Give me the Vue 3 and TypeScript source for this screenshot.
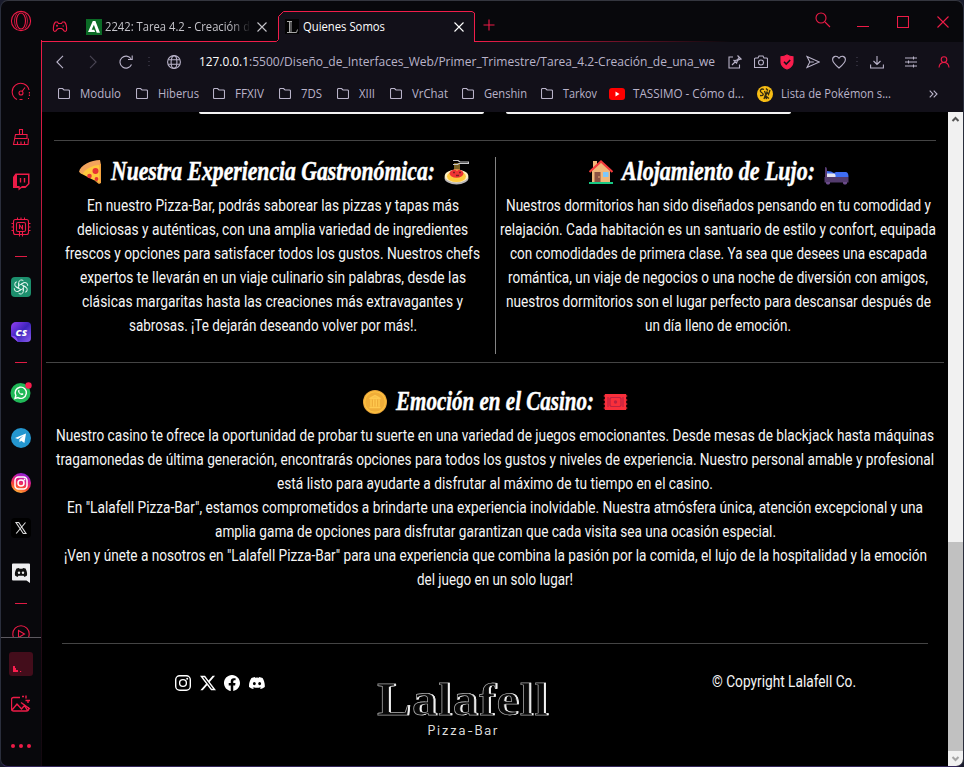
<script setup lang="ts">
import { h } from 'vue'

interface FitProps { t: string; w: number; h: number; b: number }

// One line of text stretched or condensed to a known measure
const FitText = (p: FitProps) =>
  h('svg', { width: p.w, height: p.h, class: 'fit' }, [
    h('text', { x: 0, y: p.b, textLength: p.w, lengthAdjust: 'spacingAndGlyphs', fill: 'currentColor' }, p.t),
  ])
FitText.props = ['t', 'w', 'h', 'b']

type Line = [string, number]

const food: Line[] = [
  ['En nuestro Pizza-Bar, podrás saborear las pizzas y tapas más', 372],
  ['deliciosas y auténticas, con una amplia variedad de ingredientes', 391],
  ['frescos y opciones para satisfacer todos los gustos. Nuestros chefs', 415],
  ['expertos te llevarán en un viaje culinario sin palabras, desde las', 386],
  ['clásicas margaritas hasta las creaciones más extravagantes y', 381],
  ['sabrosas. ¡Te dejarán deseando volver por más!.', 288],
]
const rooms: Line[] = [
  ['Nuestros dormitorios han sido diseñados pensando en tu comodidad y', 425],
  ['relajación. Cada habitación es un santuario de estilo y confort, equipada', 436],
  ['con comodidades de primera clase. Ya sea que desees una escapada', 417],
  ['romántica, un viaje de negocios o una noche de diversión con amigos,', 420],
  ['nuestros dormitorios son el lugar perfecto para descansar después de', 425],
  ['un día lleno de emoción.', 146],
]
const casino: Line[] = [
  ['Nuestro casino te ofrece la oportunidad de probar tu suerte en una variedad de juegos emocionantes. Desde mesas de blackjack hasta máquinas', 878],
  ['tragamonedas de última generación, encontrarás opciones para todos los gustos y niveles de experiencia. Nuestro personal amable y profesional', 878],
  ['está listo para ayudarte a disfrutar al máximo de tu tiempo en el casino.', 436],
  ['En "Lalafell Pizza-Bar", estamos comprometidos a brindarte una experiencia inolvidable. Nuestra atmósfera única, atención excepcional y una', 856],
  ['amplia gama de opciones para disfrutar garantizan que cada visita sea una ocasión especial.', 561],
  ['¡Ven y únete a nosotros en "Lalafell Pizza-Bar" para una experiencia que combina la pasión por la comida, el lujo de la hospitalidad y la emoción', 863],
  ['del juego en un solo lugar!', 156],
]

// name, text width, distance to the next bookmark
const folders: [string, number, number][] = [
  ['Modulo', 41, 78],
  ['Hiberus', 41, 77],
  ['FFXIV', 29, 66],
  ['7DS', 21, 58],
  ['XIII', 16, 53],
  ['VrChat', 36, 72],
  ['Genshin', 43, 79],
  ['Tarkov', 34, 68],
]
</script>

<template>
  <div class="window">
    <aside class="rail">
      <div class="slot first">
        <svg width="22" height="22" viewBox="0 0 22 22" class="red"><circle cx="11" cy="11" r="9.6" /><ellipse cx="11" cy="11" rx="4.5" ry="8" /><path d="M7 3.5c-3.2 4-3.2 11 0 15M15 3.5c3.2 4 3.2 11 0 15" stroke-width=".8" /></svg>
      </div>
      <div class="slot">
        <svg width="20" height="20" viewBox="0 0 20 20" class="red"><path d="M6 17.5A8.5 8.5 0 1 1 18 8" /><path d="M18.4 10v4M17.5 16v1" stroke-dasharray="1.6 1" /><circle cx="10" cy="11" r="2" /><path d="m11 9.500 3-4M8.500 17.500h3" /></svg>
      </div>
      <div class="slot">
        <svg width="18" height="18" viewBox="0 0 18 18" class="red"><path d="M7.500 6V1.500h3V6M3.500 6.500h11.500v4H2.700zM2.700 10.500 1.500 16.500h14.500l.5-6M5.500 16v-2.500M9 16v-2.500M12.500 16v-2.500" /></svg>
      </div>
      <div class="slot">
        <svg width="18" height="18" viewBox="0 0 18 18"><path d="M3.500.5h14v10.500l-4 4H9.500l-3 2.500v-2.500H1V4z" fill="#ed1b47" /><path d="M5 2h11v8.500L13.500 13H10l-2.300 1.700V13H5z" fill="#08080c" /><path d="M8.500 5v4.500M12.500 5v4.500" stroke="#ed1b47" stroke-width="1.4" /></svg>
      </div>
      <div class="slot">
        <svg width="20" height="20" viewBox="0 0 20 20" class="red"><rect x="2.500" y="2.500" width="15" height="15" rx="2" /><rect x="5.500" y="5.500" width="9" height="9" rx="1.500" /><path d="M8.500 12V8l3 4V8" /><path d="M6.500.5V3M10 .5V3M13.500.5V3M8.500 14.500v5M11.500 14.500v5M.5 6.500H3M.5 10H3M.5 13.500H3M17 6.500h2.500M17 10h2.500M17 13.500h2.500" /></svg>
      </div>
      <div class="slot sep"><i></i></div>
      <div class="slot">
        <svg width="20" height="20" viewBox="0 0 20 20"><rect width="20" height="20" rx="4" fill="#1c8f6d" /><g fill="none" stroke="#dff3ec" stroke-width="1"><path v-for="a in 6" :key="a" :transform="`rotate(${a * 60} 10 10)`" d="M7.700 8.600V5.600a2.800 2.800 0 0 1 4.700-1.900M7.700 8.600l4.600-2.600" /></g></svg>
      </div>
      <div class="slot">
        <svg width="20" height="20" viewBox="0 0 20 20"><defs><linearGradient id="cs" x1="0" y1="0" x2="1" y2="1"><stop offset="0" stop-color="#9440f4" /><stop offset=".5" stop-color="#3d24bb" /><stop offset="1" stop-color="#8a5bf0" /></linearGradient></defs><path d="M5 0h11a4 4 0 0 1 4 4v12a4 4 0 0 1-4 4H7L0 14V5a5 5 0 0 1 5-5z" fill="url(#cs)" /><path d="M0 14c4-1 6 1 7 6z" fill="#8b4cf0" /><text x="4.500" y="13.500" font-size="8.500" textLength="11.500" lengthAdjust="spacingAndGlyphs" class="cs">CS</text></svg>
      </div>
      <div class="slot sep tall"><i></i></div>
      <div class="slot">
        <svg width="22" height="22" viewBox="0 0 22 22"><circle cx="10.500" cy="11" r="10" fill="#20b858" /><path d="m5 16.500.9-3a5.600 5.600 0 1 1 2.100 2.100z" fill="none" stroke="#fff" stroke-width="1.400" /><path d="M8.500 8c-.9.8-.5 2.200.8 3.600 1.400 1.500 3 2 3.900 1l.2-.8-1.500-.8-.7.7c-1-.4-1.600-1-2-1.900l.5-.7-.6-1.300z" fill="#fff" /><circle cx="18.500" cy="3.500" r="3.200" fill="#fa1e4e" /></svg>
      </div>
      <div class="slot">
        <svg width="20" height="20" viewBox="0 0 20 20"><circle cx="10" cy="10" r="10" fill="#2496cf" /><path d="m4 10 11-4.500L13.400 15l-3.200-2.300-1.600 1.600-.3-2.800 4.200-4-5.500 3.500z" fill="#fff" /></svg>
      </div>
      <div class="slot">
        <svg width="20" height="20" viewBox="0 0 20 20"><defs><linearGradient id="ig" x1=".2" y1="1" x2=".6" y2="0"><stop offset="0" stop-color="#ffc83c" /><stop offset=".35" stop-color="#fb4a32" /><stop offset=".65" stop-color="#e01c86" /><stop offset="1" stop-color="#8c24dc" /></linearGradient></defs><circle cx="10" cy="10" r="10" fill="url(#ig)" /><g fill="none" stroke="#fff" stroke-width="1.500"><rect x="4" y="4" width="12" height="12" rx="3.500" /><circle cx="10" cy="10" r="3" /></g><circle cx="13.500" cy="6.500" r=".9" fill="#fff" /></svg>
      </div>
      <div class="slot">
        <svg width="20" height="20" viewBox="0 0 20 20"><rect width="20" height="20" rx="4" fill="#000" /><path d="M5 4.500h2.700l7.300 11h-2.700zM14.500 4.500 5.200 15.500" fill="none" stroke="#dcdcdc" stroke-width="1.100" /></svg>
      </div>
      <div class="slot">
        <svg width="18" height="20" viewBox="0 0 18 20"><path d="M1 .5h16a1 1 0 0 1 1 1V20l-3.500-2.500H1a1 1 0 0 1-1-1v-15a1 1 0 0 1 1-1z" fill="#eeeef0" /><path d="M4.500 5.500 7 5l.5.8h3L11 5l2.500.5c1.300 2.200 1.900 4.500 1.500 7L12.500 14l-.9-1.300H6.400L5.500 14 3 12.500c-.4-2.500.2-4.800 1.500-7z" fill="#111" /><circle cx="7" cy="9.800" r="1.200" fill="#eee" /><circle cx="11" cy="9.800" r="1.200" fill="#eee" /></svg>
      </div>
      <div class="slot sep tall"><i></i></div>
      <div class="slot cut">
        <svg width="18" height="18" viewBox="0 0 18 18" class="red"><circle cx="9" cy="9" r="8.200" /><path d="m6.500 5.500 6 3.500-6 3.500z" /></svg>
      </div>
      <div class="slot player">
        <svg width="24" height="24" viewBox="0 0 24 24"><rect width="24" height="24" rx="3" fill="#430d1b" /><path d="M4 14v6h5v-2H7v-2H6v-2zM11 19h1.200v1H11z" fill="#fa1e4e" /></svg>
      </div>
      <div class="slot photo">
        <svg width="20" height="18" viewBox="0 0 20 18" class="red"><path d="M9 2.500H2.500a2 2 0 0 0-2 2V14a2 2 0 0 0 2 2h13a2 2 0 0 0 2-2v-2M1 15l5-6 4.500 5 3-3.500 3 5M10 7.500l9 6.500M11 1.500h2M15 .5v3M17 5v3M14.500 5.500h4.500" stroke-width="1.400" /></svg>
      </div>
      <div class="slot more"><b></b><b></b><b></b></div>
    </aside>

    <main>
      <header class="tabs">
        <svg class="outline" width="923" height="42" viewBox="0 0 923 42"><defs><linearGradient id="fade" gradientUnits="userSpaceOnUse" x1="434" x2="690" y1="0" y2="0"><stop offset="0" stop-color="#f01d4a" /><stop offset="1" stop-color="#f01d4a" stop-opacity="0" /></linearGradient></defs><path d="M237.500 42V16.500l5-5h188.500l2.500 2V42z" fill="#121019" /><path d="M0 41.500h235.500l2-2v-23l5-5H431l2.500 1.500v28.500" fill="none" stroke="#f01d4a" /><rect x="433" y="41" width="260" height="1" fill="url(#fade)" /></svg>
        <svg class="pad red" width="16" height="12" viewBox="0 0 16 12"><path d="M3.500 1h2l1 1.500h3l1-1.500h2c1.500 1.500 2.300 5.500 2 8.500-1 1.500-2.500 1-3.500-1L9.500 7.500h-3L5 8.500c-1 2-2.500 2.500-3.500 1C1.200 6.500 2 2.500 3.500 1z" /><path d="M4 4.800h2M5 3.800v2M10.500 5h1.500" /></svg>
        <div class="tab idle">
          <svg width="16" height="16" viewBox="0 0 16 16"><rect width="16" height="16" fill="#0b6b26" /><path d="M6.800 2h2.600L14 13.700h-3.300l-2.800-8-2.200 5h2.500l1 2.300H2z" fill="#fff" /></svg>
          <div class="fade"><FitText t="2242: Tarea 4.2 - Creación d" :w="145" :h="18" :b="13" /></div>
          <svg width="10" height="10" viewBox="0 0 10 10" class="close"><path d="m.5.5 9 9m0-9-9 9" /></svg>
        </div>
        <div class="tab active">
          <svg width="16" height="16" viewBox="0 0 16 16"><rect width="14" height="15" fill="#030304" /><path d="M2 2.500h5M4.500 2.500v11M6 2.500v11M2 13.500h9.500l1-3" fill="none" stroke="#a8a8a8" /></svg>
          <FitText t="Quienes Somos" :w="82" :h="18" :b="13" />
          <svg width="10" height="10" viewBox="0 0 10 10" class="close"><path d="m.5.5 9 9m0-9-9 9" /></svg>
        </div>
        <svg class="plus red" width="12" height="12" viewBox="0 0 12 12"><path d="M6 .5v11M.5 6h11" /></svg>
        <div class="controls">
          <svg class="red" width="16" height="16" viewBox="0 0 16 16"><circle cx="6" cy="6" r="5" /><path d="m10 10 5 5" /></svg>
          <svg class="red" width="14" height="14" viewBox="0 0 14 14"><path d="M1 11.500h12" /></svg>
          <svg class="red" width="12" height="12" viewBox="0 0 12 12"><path d="M.5.5h11v11H.5z" /></svg>
          <svg class="red" width="12" height="12" viewBox="0 0 12 12"><path d="m.5.5 11 11m0-11-11 11" /></svg>
        </div>
      </header>

      <nav class="toolbar">
        <svg width="8" height="14" viewBox="0 0 8 14"><path d="M7 .8.900 7 7 13.200" /></svg>
        <svg width="8" height="14" viewBox="0 0 8 14" class="dim"><path d="m1 .8 6.100 6.200L1 13.200" /></svg>
        <svg width="14" height="14" viewBox="0 0 14 14"><path d="M12.500 9.500A6 6 0 1 1 12 3.800M13.200.5V4.500H9" /></svg>
        <svg width="2" height="12" viewBox="0 0 2 12" class="dots"><path d="M1 1v11" stroke-dasharray="1 3" stroke-width="2" /></svg>
        <svg width="14" height="14" viewBox="0 0 14 14"><circle cx="7" cy="7" r="6.400" /><ellipse cx="7" cy="7" rx="2.900" ry="6.400" /><path d="M1.300 4.800h11.400M1.300 9.200h11.400" /></svg>
        <div class="url"><FitText class="host" t="127.0.0.1" :w="50" :h="18" :b="13" /><FitText t=":5500/Diseño_de_Interfaces_Web/Primer_Trimestre/Tarea_4.2-Creación_de_una_we" :w="466" :h="18" :b="13" /></div>
        <svg width="14" height="14" viewBox="0 0 14 14"><path d="M5 2H1v11h10.500V9.500M4 10l3.500-3.500M5.500 5 9 8.500M6.500 5.800l3-1 2-3M8.500 8.200l1-2.700 3-1.500M9.500.5l4 4" /></svg>
        <svg width="14" height="14" viewBox="0 0 14 14"><path d="M1.500 3H4l1-2h4l1 2h2.500a1 1 0 0 1 1 1v8.500h-13V4a1 1 0 0 1 1-1z" /><circle cx="7" cy="7.500" r="2.500" /></svg>
        <svg width="14" height="16" viewBox="0 0 14 16"><path d="M7 1c2 1.300 4 1.700 6 1.700V8c0 3.500-2.500 5.700-6 7-3.500-1.300-6-3.500-6-7V2.700C3 2.700 5 2.300 7 1z" fill="#fa1e4e" stroke="#fa1e4e" /><path d="m4 7.800 2.200 2.200L10.200 6" stroke="#121019" stroke-width="1.600" /></svg>
        <svg width="14" height="14" viewBox="0 0 14 14"><path d="m1 1.500 12.300 5.500L1 12.500 3.800 7zM3.800 7h4" /></svg>
        <svg width="14" height="14" viewBox="0 0 14 14"><path d="M7 13C3 9.800.6 7.500.6 4.600.6 1 5 0 7 3.300 9 0 13.400 1 13.400 4.600 13.400 7.500 11 9.800 7 13z" /></svg>
        <svg width="2" height="12" viewBox="0 0 2 12" class="dots"><path d="M1 1v11" stroke-dasharray="1 3" stroke-width="2" /></svg>
        <svg width="14" height="14" viewBox="0 0 14 14"><path d="M7 1v8.500M3.500 6 7 9.500 10.500 6M.6 9.500V13h12.800V9.500" /></svg>
        <svg width="12" height="12" viewBox="0 0 12 12"><path d="M0 2h12M0 6h12M0 10h12M8.500.5v3M3.500 4.500v3M8.500 8.500v3" /></svg>
        <svg width="12" height="12" viewBox="0 0 12 12" class="red"><circle cx="6" cy="3.600" r="2.800" /><path d="M1 11.500c.3-3 2-5 5-5s4.700 2 5 5" /></svg>
      </nav>

      <nav class="marks">
        <span v-for="[name, w, pitch] in folders" :key="name" class="mark" :style="{ width: pitch + 'px' }">
          <svg width="12" height="11" viewBox="0 0 12 11"><path d="M.5 1.500a1 1 0 0 1 1-1h3L6 2h4.500a1 1 0 0 1 1 1v6.500a1 1 0 0 1-1 1h-9a1 1 0 0 1-1-1z" /></svg>
          <FitText :t="name" :w="w" :h="18" :b="13" />
        </span>
        <span class="mark site tube">
          <svg width="16" height="12" viewBox="0 0 16 12"><rect width="16" height="12" rx="3" fill="#f00" class="solid" /><path d="M6.500 3.500v5l4-2.500z" fill="#fff" class="solid" /></svg>
          <FitText t="TASSIMO - Cómo d..." :w="111" :h="18" :b="13" />
        </span>
        <span class="mark site list">
          <svg width="16" height="16" viewBox="0 0 16 16"><circle cx="8" cy="8" r="8" fill="#f8bd14" class="solid" /><path d="M7 3.500C4 2 2 5 4.500 6.500S7 10 3 9.500M7.500 5l1.500 4 1-3 1.500 2.500L13 4M7 13l1-3 1.500 3V10.500l2.500 2M9 2.500l2 2" stroke="#322a10" stroke-width="1.300" /></svg>
          <FitText t="Lista de Pokémon s..." :w="110" :h="18" :b="13" />
        </span>
        <svg width="9" height="8" viewBox="0 0 9 8"><path d="m.7.700 3.300 3.300L.700 7.300M4.700.700 8 4 4.700 7.300" /></svg>
      </nav>

      <div class="view">
        <article class="page">
          <div class="cards"><i></i><i></i></div>
          <div class="pair">
            <section>
              <h2>
                <svg width="23" height="24" viewBox="0 0 23 24"><path d="M1 13C2 6 11 1 21 1v22Q12 19 1 13z" fill="#ffc83d" /><path d="M0 12C1 5 12 0 21 0l1 5C15 4.500 7 8 3.500 14z" fill="#f3a45c" /><path d="M20.500 4H22v19l-2 1-4-3 4.500 1z" fill="#f5a340" /><g fill="#e83434"><circle cx="16.500" cy="11" r="3" /><circle cx="10.500" cy="16" r="2.300" /><circle cx="17.500" cy="19" r="1.900" /></g></svg>
                <FitText t="Nuestra Experiencia Gastronómica:" :w="324" :h="34" :b="25" />
                <svg width="25" height="25" viewBox="0 0 25 25"><ellipse cx="12.500" cy="18" rx="12" ry="6.500" fill="#bdb9b9" /><ellipse cx="12.500" cy="16" rx="11.800" ry="6.500" fill="#fff0c0" /><ellipse cx="12.500" cy="16.500" rx="9.500" ry="5.500" fill="#ffc93f" /><ellipse cx="12.500" cy="13.500" rx="7" ry="4.200" fill="#ef3434" /><path d="M11 10V3M13 11V3M15 10V3" stroke="#f5c348" /><path d="M9 .5h5l2 1.500h8.500v1.500H15l-1.500 1H9" stroke="#c8c8ca" stroke-width="1.200" fill="none" /><path d="M9 12.500h2M12 15.500h3M15 12.500h2" stroke="#7e2021" stroke-width="1.500" /></svg>
              </h2>
              <p><FitText v-for="[t, w] in food" :key="t" :t="t" :w="w" :h="24" :b="17" /></p>
            </section>
            <section class="right">
              <h2>
                <svg width="24" height="24" viewBox="0 0 24 24"><path d="M4 1h4v8H4zM3 10l9-8 9 8v12H3z" fill="#f1b779" /><path d="M.5 12 12 1.500 23.500 12" fill="none" stroke="#f33b3c" stroke-width="2.200" /><path d="M5.500 12h6v10h-6z" fill="#8d5242" /><path d="M14 12h5.500v5H14z" fill="#7cc8fb" /><path d="M0 22h24v2H0z" fill="#18c984" /><circle cx="10" cy="17" r=".8" fill="#f1b779" /></svg>
                <FitText t="Alojamiento de Lujo:" :w="193" :h="34" :b="25" />
                <svg class="low" width="25" height="18" viewBox="0 0 25 18"><path d="M1 0q2 0 2 2v10H1z" fill="#573b72" /><path d="M3 7V4l4 .5 3 1.500 2-1h10q2.500.5 2.500 5H10z" fill="#3f6df3" /><path d="M3 6.500h6.500q2 0 2 2v2H3z" fill="#e4e3ef" /><path d="M.5 10h24v5.500H.5z" fill="#533b6d" /><path d="M2 15h4v1.500l-1 1H3l-1-1zM19 15h4v1.500l-1 1h-2l-1-1z" fill="#6b4b8a" /></svg>
              </h2>
              <p><FitText v-for="[t, w] in rooms" :key="t" :t="t" :w="w" :h="24" :b="17" /></p>
            </section>
          </div>
          <section class="casino">
            <h2>
              <svg width="24" height="24" viewBox="0 0 24 24"><circle cx="12" cy="12" r="12" fill="#eaa63b" /><circle cx="12" cy="12" r="10.800" fill="#ffc440" /><circle cx="12" cy="12" r="9.800" fill="#efad39" /><path d="M6.500 8.500 12 5.500l5.500 3zM8 9.500v7M10.700 9.500v7M13.300 9.500v7M16 9.500v7M6.500 17.500h11" fill="#f8c04a" stroke="#ffc94f" stroke-width="1.400" /></svg>
              <FitText t="Emoción en el Casino:" :w="198" :h="34" :b="25" />
              <svg width="25" height="16" viewBox="0 0 25 16"><path d="M2 0h21a2 2 0 0 0 2 2 2 2 0 0 0 0 4 2 2 0 0 0 0 4 2 2 0 0 0 0 4 2 2 0 0 0-2 2H2a2 2 0 0 0-2-2 2 2 0 0 0 0-4 2 2 0 0 0 0-4 2 2 0 0 0 0-4 2 2 0 0 0 2-2z" fill="#f92f3b" /><path d="M5 3v10M20 3v10M8 3.500h9l1 1v7l-1 1H8l-1-1v-7z" fill="none" stroke="#bd2241" stroke-width="1.200" /><circle cx="12.500" cy="8" r="1.700" fill="#bd2241" /></svg>
            </h2>
            <p><FitText v-for="[t, w] in casino" :key="t" :t="t" :w="w" :h="24" :b="17" /></p>
          </section>
          <footer>
            <div class="social">
              <svg width="16" height="16" viewBox="0 0 16 16"><g fill="none" stroke="#fff" stroke-width="1.400"><rect x=".7" y=".7" width="14.600" height="14.600" rx="4" /><circle cx="8" cy="8" r="3.400" /></g><circle cx="12.200" cy="3.800" r="1" fill="#fff" /></svg>
              <svg width="16" height="16" viewBox="0 0 16 16"><path d="M12.600.750h2.454l-5.360 6.142L16 15.250h-4.937l-3.867-5.070-4.425 5.070H.316l5.733-6.570L0 .750h5.063l3.495 4.633L12.601.750Zm-.86 13.028h1.360L4.323 2.145H2.865z" fill="#fff" /></svg>
              <svg width="16" height="16" viewBox="0 0 16 16"><path d="M16 8.049c0-4.446-3.582-8.050-8-8.050C3.580 0-.002 3.603-.002 8.050c0 4.017 2.926 7.347 6.750 7.951v-5.625h-2.030V8.050H6.750V6.275c0-2.017 1.195-3.131 3.022-3.131.876 0 1.791.157 1.791.157v1.980h-1.009c-.993 0-1.303.621-1.303 1.258v1.510h2.218l-.354 2.326H9.250V16c3.824-.604 6.750-3.934 6.750-7.951z" fill="#fff" /></svg>
              <svg width="16" height="16" viewBox="0 0 16 16"><path d="M13.545 2.907a13.200 13.200 0 0 0-3.257-1.011.05.05 0 0 0-.052.025c-.141.250-.297.577-.406.833a12.200 12.200 0 0 0-3.658 0 8 8 0 0 0-.412-.833.050.050 0 0 0-.052-.025c-1.125.194-2.220.534-3.257 1.011C.356 6.024-.213 9.047.066 12.032c.001.014.010.028.021.037a13.300 13.300 0 0 0 3.995 2.020c.308-.420.582-.863.818-1.329-.440-.166-.858-.370-1.248-.595l.248-.190c2.619 1.196 5.454 1.196 8.041 0l.248.195c-.398.233-.813.430-1.249.594.240.465.515.909.817 1.329a13.200 13.200 0 0 0 4.001-2.020c.334-3.451-.559-6.449-2.213-9.166M5.347 10.200c-.789 0-1.438-.724-1.438-1.612s.637-1.613 1.438-1.613c.807 0 1.451.730 1.438 1.613 0 .888-.637 1.612-1.438 1.612m5.316 0c-.788 0-1.438-.724-1.438-1.612s.637-1.613 1.438-1.613c.807 0 1.451.730 1.438 1.613 0 .888-.631 1.612-1.438 1.612" fill="#fff" /></svg>
            </div>
            <svg class="logo" width="174" height="60" viewBox="0 0 174 60">
              <defs>
                <filter id="inline" x="-5%" y="-10%" width="110%" height="120%" color-interpolation-filters="sRGB">
                  <feOffset in="SourceAlpha" dx="-2.500" dy="0" result="left" />
                  <feFlood flood-color="#f2f2f2" />
                  <feComposite in2="SourceAlpha" operator="in" />
                  <feComposite in2="left" operator="out" result="lit" />
                  <feMerge><feMergeNode in="SourceGraphic" /><feMergeNode in="lit" /></feMerge>
                </filter>
              </defs>
              <text x="1" y="34.500" textLength="172" lengthAdjust="spacingAndGlyphs" font-size="47" class="word" filter="url(#inline)">Lalafell</text>
              <text x="51.500" y="55" textLength="70" font-size="12.500" class="sub">Pizza-Bar</text>
            </svg>
            <FitText class="copy" t="© Copyright Lalafell Co." :w="144" :h="24" :b="17" />
          </footer>
        </article>
        <div class="scroll">
          <svg width="15" height="17" viewBox="0 0 15 17"><path d="m4.500 9 3-3 3 3" fill="none" stroke="#555" stroke-width="2" /></svg>
          <i></i>
          <svg width="15" height="15" viewBox="0 0 15 15"><path d="m4.500 6 3 3 3-3" fill="none" stroke="#a5a5a5" stroke-width="2" /></svg>
        </div>
      </div>
    </main>
  </div>
</template>

<style>
body { margin: 0; background: #191b2b; overflow: hidden; }
</style>

<style scoped>
* { box-sizing: border-box; }
svg { display: block; flex: none; }
.fit { overflow: visible; white-space: pre; }
.window {
  width: 964px; height: 767px; display: flex; overflow: hidden;
  background: #08080c; color: #b9b3c9;
  border: 1px solid #2a2e3c; border-top-color: #34363f; border-bottom-color: #34275a; border-radius: 8px;
  font: 12.5px "Open Sans", "Noto Sans", sans-serif;
}
.red { fill: none; stroke: #ed1b47; stroke-width: 1.1; }
.solid { stroke: none; }
.rail { width: 40px; flex: none; display: flex; flex-direction: column; }
.slot { height: 45px; flex: none; display: flex; align-items: center; justify-content: center; }
.first { height: 40px; margin-bottom: 28px; }
.sep { height: 15px; }
.tall { height: 16px; }
.sep i { width: 12px; height: 1px; background: #e01b44; }
.cs { fill: #fff; font-weight: 800; font-style: italic; }
.cut { height: 26px; overflow: hidden; align-items: flex-start; padding-top: 14px; }
.player { height: 47px; border-top: 1px solid #5c5960; padding-top: 5px; }
.photo { height: 40px; }
.more { height: 43px; gap: 4px; }
.more b { width: 4px; height: 4px; border-radius: 2px; background: #ed1b47; }

main { flex: 1; min-width: 0; display: flex; flex-direction: column; border-left: 1px solid; border-image: linear-gradient(#08080c 40px, #ed1b47 40px, #c21a40 200px, #70142a 400px, #250a16 620px, #12080f) 1; }
.tabs { position: relative; height: 41px; display: flex; align-items: center; flex: none; padding-top: 10px; }
.outline { position: absolute; left: -1px; top: -1px; }
.pad { margin-left: 10px; }
.tab { position: relative; display: flex; align-items: center; }
.idle { margin-left: 18px; width: 192px; color: #c4c3c9; }
.fade { margin-left: 3px; width: 146px; overflow: hidden; -webkit-mask: linear-gradient(90deg, #000 125px, transparent 146px); mask: linear-gradient(90deg, #000 125px, transparent 146px); }
.idle .close { margin-left: 6px; }
.active { width: 196px; padding-left: 7px; color: #fff; }
.active .fit { margin-left: 2px; }
.active .close { margin-left: auto; margin-right: 10px; }
.close { fill: none; stroke: currentColor; stroke-width: 1.1; }
.plus { margin-left: 9px; margin-top: -4px; }
.controls { margin: -10px 14px 0 auto; display: flex; align-items: center; }
.controls svg:nth-child(2) { margin: 0 27px 0 25px; }
.controls svg:nth-child(4) { margin-left: 28px; }
.controls svg:nth-child(1) { margin-top: -3px; }

.toolbar, .marks { background: #121019; flex: none; }
.toolbar { height: 39px; display: grid; align-items: center; justify-items: center; grid-template-columns: 36px 30px 36px 10px 40px 528px 26px 26px 26px 26px 26px 10px 30px 38px 28px; }
.toolbar svg:not(.fit), .marks svg:not(.fit) { fill: none; stroke: #b9b3c9; stroke-width: 1.1; }
.toolbar svg.dim { stroke: #494553; }
.toolbar svg.dots { stroke: #302d3a; }
.toolbar svg.red { stroke: #ed1b47; }
.url { justify-self: start; display: flex; padding-left: 5px; }
.host { color: #fff; }
.marks { height: 31px; display: flex; align-items: center; padding: 0 25px 6px 16px; }
.mark { display: flex; align-items: center; gap: 10px; flex: none; }
.site { gap: 8px; }
.tube { width: 148px; }
.list { width: 172px; }

.view { flex: 1; min-height: 0; display: flex; background: #000; }
.page { width: 906px; color: #f6f6f6; font: 17px Roboto, sans-serif; }
.cards { height: 29px; margin: 0 12px; border-bottom: 1px solid #444; padding-left: 145px; display: flex; gap: 22px; }
.cards i { width: 285px; height: 2px; background: #f4f4f4; border-radius: 0 0 3px 3px; }
.pair { display: flex; height: 222px; margin: 0 4px; padding: 16px 0 8px; border-bottom: 1px solid #444; }
.pair section { width: 450px; border-right: 1px solid #848484; padding-left: 4px; }
.pair .right { width: 444px; border: 0; padding-left: 0; }
h2 { margin: 0; height: 30px; display: flex; justify-content: center; align-items: center; gap: 9px; font: italic bold 27px "Liberation Serif", serif; color: #fff; }
.pair h2 { padding-left: 2px; }
h2 .fit { stroke: #fff; stroke-width: 0.5; }
.low { margin-top: 8px; }
p { margin: 7px 0 0; display: flex; flex-direction: column; align-items: center; }
.casino { padding-top: 24px; height: 280px; }
footer { margin: 0 20px; border-top: 1px solid #444; display: flex; align-items: flex-start; }
.social { display: flex; gap: 8.7px; padding: 31px 0 0 113px; width: 314px; }
.logo { margin-top: 36px; overflow: visible; }
.word { font-family: "Liberation Serif", serif; font-weight: bold; fill: #080808; stroke: #a8a8a8; stroke-width: 0.7; }
.sub { font-family: Inter, sans-serif; fill: #ddd; }
.copy { margin: 26px 0 0 162px; }
.scroll { width: 15px; background: #f1f1f1; display: flex; flex-direction: column; }
.scroll i { margin-top: auto; height: 209px; background: #c1c1c1; }
</style>
